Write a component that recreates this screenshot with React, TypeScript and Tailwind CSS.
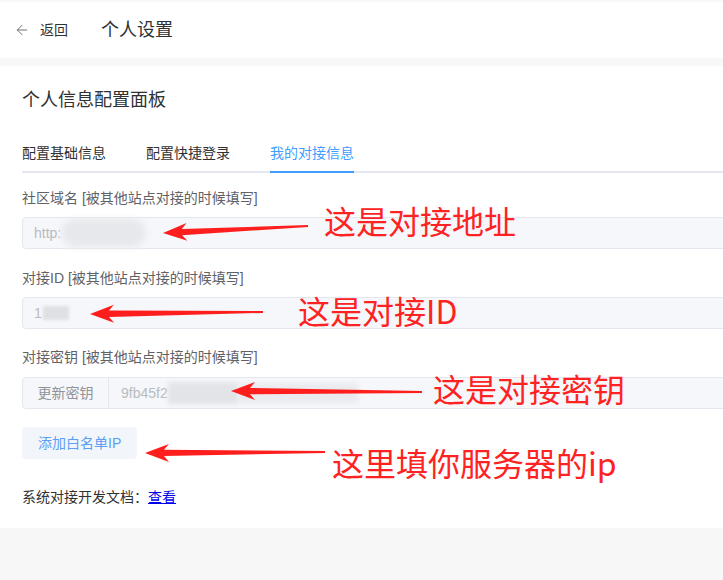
import { ArrowLeft } from "lucide-react";

const FONT = { fontFamily: '"Liberation Sans", "Noto Sans CJK SC", sans-serif' };

const TABS = ["配置基础信息", "配置快捷登录", "我的对接信息"];

// red hand-drawn style arrow: tip at (hx, hy), tail at (tx, ty)
function arrowPoints(hx: number, hy: number, tx: number, ty: number) {
  const dx = tx - hx;
  const dy = ty - hy;
  const len = Math.hypot(dx, dy);
  const ux = dx / len;
  const uy = dy / len;
  const px = -uy;
  const py = ux;
  const at = (along: number, perp: number) =>
    `${(hx + ux * along + px * perp).toFixed(1)},${(hy + uy * along + py * perp).toFixed(1)}`;
  return [
    at(0, 0),
    at(24, 9),
    at(19, 3.2),
    at(len, 0.9),
    at(len, -0.9),
    at(19, -3.2),
    at(24, -9),
  ].join(" ");
}

const ARROWS = [
  [163, 233, 308, 226],
  [90, 314, 263, 312],
  [231, 391, 422, 392],
  [145, 453, 325, 452],
];

const NOTES = [
  { text: "这是对接地址", left: 324, top: 204 },
  { text: "这是对接ID", left: 298, top: 294 },
  { text: "这是对接密钥", left: 433, top: 372 },
  { text: "这里填你服务器的ip", left: 332, top: 446 },
];

function Label({ children }: { children: React.ReactNode }) {
  return <div className="h-5 text-[14px] leading-5 text-[#606266]">{children}</div>;
}

export default function App() {
  return (
    <div className="relative min-h-[580px] w-full overflow-hidden bg-[#f7f7f7]" style={FONT}>
      <header className="mt-[2px] flex h-[56px] items-center bg-white pb-[1px] pl-[14px] pt-[1px]">
        <ArrowLeft size={16} strokeWidth={1.5} className="text-[#707277]" />
        <span className="ml-[10px] text-[14px] text-[#303133]">返回</span>
        <span className="ml-[33px] text-[18px] text-[#303133]">个人设置</span>
      </header>

      <main className="mt-2 bg-white pb-[21px] pl-[22px] pt-[22px]">
        <h1 className="h-6 text-[18px] leading-6 text-[#303133]">个人信息配置面板</h1>

        <div className="mt-[21px] flex w-[760px] border-b-2 border-[#e4e7ed]">
          {TABS.map((t, i) => (
            <div
              key={t}
              className={
                i === 2
                  ? "relative mr-10 h-[38px] text-[14px] leading-[40px] text-[#409eff]"
                  : "relative mr-10 h-[38px] text-[14px] leading-[40px] text-[#303133]"
              }
            >
              {t}
              {i === 2 && <div className="absolute -bottom-[2px] left-0 h-[2px] w-full bg-[#409eff]" />}
            </div>
          ))}
        </div>

        <div className="mt-[15px]">
          <Label>社区域名 [被其他站点对接的时候填写]</Label>
          <div className="mt-[9px] flex h-8 w-[760px] items-center rounded-l border border-[#e4e7ed] bg-[#f5f7fa] pl-[11px] text-[14px] text-[#b8bbc1]">
            http:
            <span className="ml-[1px] h-[28px] w-[84px] rounded-full bg-[#e7e8eb] blur-[3px]" />
          </div>
        </div>

        <div className="mt-[19px]">
          <Label>对接ID [被其他站点对接的时候填写]</Label>
          <div className="mt-[9px] flex h-8 w-[760px] items-center rounded-l border border-[#e4e7ed] bg-[#f5f7fa] pl-[11px] text-[14px] text-[#b8bbc1]">
            1
            <span className="ml-[1px] h-[14px] w-[26px] bg-[#dfe0e4] blur-[1.5px]" />
          </div>
        </div>

        <div className="mt-[18px]">
          <Label>对接密钥 [被其他站点对接的时候填写]</Label>
          <div className="mt-[10px] flex h-8 w-[760px] items-stretch rounded-l border border-[#e4e7ed] bg-[#f5f7fa] text-[14px]">
            <div className="flex w-[86px] items-center justify-center border-r border-[#e4e7ed] text-[#909399]">
              更新密钥
            </div>
            <div className="flex items-center pl-3 text-[#b8bbc1]">
              9fb45f2
              <span className="h-[22px] w-[70px] bg-[#e3e4e7] blur-[2px]" />
              <span className="h-[20px] w-[120px] bg-[#eaebee] blur-[2px]" />
            </div>
          </div>
        </div>

        <button className="mt-[18px] flex h-8 items-center rounded bg-[#f2f5fa] px-4 text-[14px] text-[#5a9ef5]">
          添加白名单IP
        </button>

        <div className="mt-7 h-5 text-[14px] leading-5 text-[#303133]">
          系统对接开发文档：
          <a href="#" className="text-[#0000ee] underline">
            查看
          </a>
        </div>
      </main>

      {/* red annotations laid over the screenshot */}
      <svg className="pointer-events-none absolute left-0 top-0" width="723" height="580">
        {ARROWS.map(([hx, hy, tx, ty], i) => (
          <polygon key={i} points={arrowPoints(hx, hy, tx, ty)} fill="#ff1e1e" />
        ))}
      </svg>
      {NOTES.map((n) => (
        <div
          key={n.text}
          className="pointer-events-none absolute whitespace-nowrap text-[32px] leading-8 text-[#ff2222]"
          style={{ left: n.left, top: n.top, fontFamily: '"Noto Sans CJK SC", "Liberation Sans", sans-serif' }}
        >
          {n.text}
        </div>
      ))}
    </div>
  );
}
